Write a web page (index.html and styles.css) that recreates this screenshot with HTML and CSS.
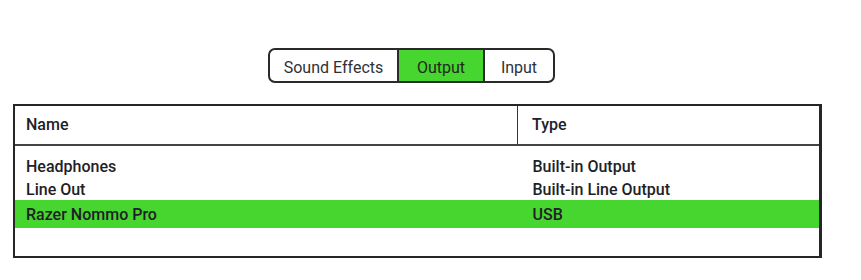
FILE: index.html
```html
<!DOCTYPE html>
<html>
<head>
<meta charset="utf-8">
<link rel="stylesheet" href="styles.css">
</head>
<body>
<div class="page">
  <div class="tabs-row">
    <div class="tabs">
      <div class="tab tab-sound">Sound Effects</div>
      <div class="tab tab-output active">Output</div>
      <div class="tab tab-input">Input</div>
    </div>
  </div>
  <div class="devices">
    <div class="head">
      <div class="cell col-name">Name</div>
      <div class="cell col-type">Type</div>
    </div>
    <div class="rows">
      <div class="row"><div class="cell col-name">Headphones</div><div class="cell col-type">Built-in Output</div></div>
      <div class="row"><div class="cell col-name">Line Out</div><div class="cell col-type">Built-in Line Output</div></div>
      <div class="row selected"><div class="cell col-name">Razer Nommo Pro</div><div class="cell col-type">USB</div></div>
    </div>
  </div>
</div>
</body>
</html>
```
FILE: styles.css
```css
html, body {
  margin: 0;
  padding: 0;
  background: #ffffff;
}
.page {
  width: 861px;
  height: 280px;
  padding-top: 48px;
  box-sizing: border-box;
  font-family: Roboto, "Liberation Sans", sans-serif;
}
.tabs-row {
  display: flex;
  padding-left: 268px;
}
.tabs {
  display: flex;
  height: 35px;
  box-sizing: border-box;
  border: 2px solid #2a2a2a;
  border-radius: 7px;
  overflow: hidden;
}
.tab {
  display: flex;
  align-items: center;
  justify-content: center;
  padding-top: 3px;
  box-sizing: border-box;
  font-size: 16px;
  color: #2e3238;
}
.tab-sound { width: 127px; }
.tab-output { width: 86px; border-left: 2px solid #2a2a2a; }
.tab-input { width: 70px; border-left: 2px solid #2a2a2a; }
.tab.active {
  background: #47d52f;
  color: #1f2a1c;
}
.devices {
  margin-top: 21px;
  margin-left: 13px;
  width: 809px;
  height: 154px;
  box-sizing: border-box;
  border: 2px solid #262626;
  border-right-width: 3px;
  color: #1e2126;
  font-size: 16px;
  font-weight: 500;
}
.head {
  display: flex;
  height: 38px;
  border-bottom: 2px solid #444;
}
.head .cell {
  display: flex;
  align-items: center;
  padding-bottom: 2px;
}
.col-name {
  width: 502px;
  padding-left: 11px;
  box-sizing: border-box;
}
.head .col-type {
  border-left: 1.5px solid #333;
}
.col-type {
  padding-left: 14px;
}
.rows {
  padding-top: 8px;
}
.row {
  display: flex;
  align-items: center;
  height: 23px;
  padding-top: 2px;
  box-sizing: border-box;
}
.row .col-type {
  padding-left: 15.5px;
}
.row.selected {
  height: 28px;
  padding-top: 0;
  background: #47d52f;
}
```
